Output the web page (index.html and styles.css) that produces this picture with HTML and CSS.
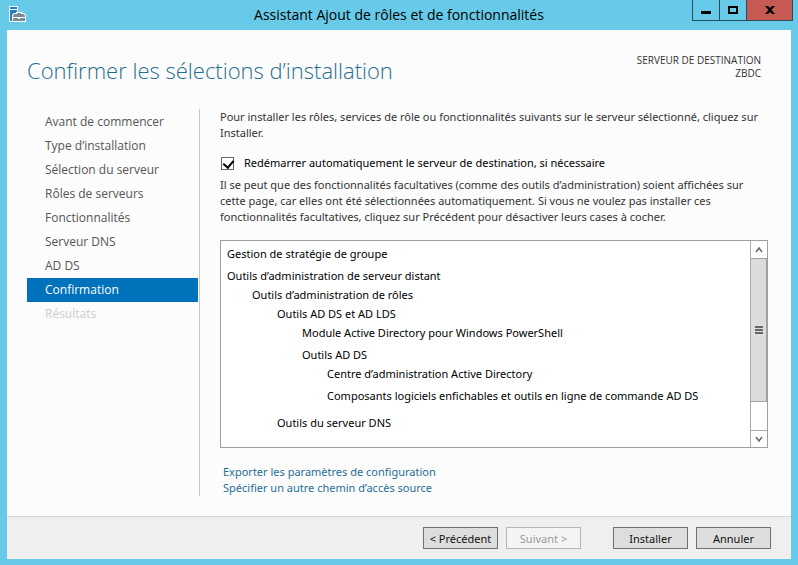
FILE: index.html
```
<!DOCTYPE html>
<html lang="fr">
<head>
  <meta charset="UTF-8" />
  <meta name="viewport" content="width=device-width, initial-scale=1.0"/>
  <title>Assistant Ajout de rôles et de fonctionnalités</title>
  <link rel="stylesheet" href="styles.css">
</head>
<body>
  <div class="window">
    <header class="titlebar">
      <svg class="app-icon" width="17" height="17" viewBox="0 0 17 17">
        <path d="M0 0h9v16H0z" fill="#fff"/>
        <path d="M1 1h7v2H1zM1 4h7v3H5v2H3v6H1z" fill="#2b7cc4"/>
        <path d="M3 16V9l2-2h2V6h6v1h2l2 2v7z" fill="#fff"/>
        <path d="M4 12h5v1h2v-1h5v3H4zM4 9.500L5.500 8h9L16 9.500V11H4zM8 7h4v1H8z" fill="#7b8a94"/>
      </svg>
      <span class="window-title">Assistant Ajout de rôles et de fonctionnalités</span>
      <div class="controls">
        <button type="button" aria-label="Réduire"><svg width="10" height="8" viewBox="0 0 10 8"><path d="M0 5h10v3H0z"/></svg></button>
        <button type="button" aria-label="Agrandir"><svg width="10" height="8" viewBox="0 0 10 8"><path d="M0 0h10v8H0zM2 2v4h6V2z" fill-rule="evenodd"/></svg></button>
        <button type="button" class="close" aria-label="Fermer"><svg width="10" height="8" viewBox="0 0 10 8"><path d="M0 0h3l2 2 2-2h3L6.500 4 10 8H7L5 6 3 8H0l3.500-4z"/></svg></button>
      </div>
    </header>

    <div class="panel">
      <div class="heading">
        <h1>Confirmer les sélections d’installation</h1>
        <p class="server">SERVEUR DE DESTINATION<br>ZBDC</p>
      </div>

      <div class="body">
        <nav class="steps">
          <a href="#">Avant de commencer</a>
          <a href="#">Type d’installation</a>
          <a href="#">Sélection du serveur</a>
          <a href="#">Rôles de serveurs</a>
          <a href="#">Fonctionnalités</a>
          <a href="#">Serveur DNS</a>
          <a href="#">AD DS</a>
          <a href="#" class="active" aria-current="step">Confirmation</a>
          <a class="disabled">Résultats</a>
        </nav>

        <main class="content">
          <p>Pour installer les rôles, services de rôle ou fonctionnalités suivants sur le serveur sélectionné, cliquez sur Installer.</p>
          <div class="restart">
            <input type="checkbox" id="restart" checked>
            <label for="restart">Redémarrer automatiquement le serveur de destination, si nécessaire</label>
          </div>
          <p>Il se peut que des fonctionnalités facultatives (comme des outils d’administration) soient affichées sur cette page, car elles ont été sélectionnées automatiquement. Si vous ne voulez pas installer ces fonctionnalités facultatives, cliquez sur Précédent pour désactiver leurs cases à cocher.</p>

          <div class="selection">
            <ul class="tree">
              <li>Gestion de stratégie de groupe</li>
              <li class="group">Outils d’administration de serveur distant
                <ul>
                  <li>Outils d’administration de rôles
                    <ul>
                      <li>Outils AD DS et AD LDS
                        <ul>
                          <li>Module Active Directory pour Windows PowerShell</li>
                          <li class="group">Outils AD DS
                            <ul>
                              <li>Centre d’administration Active Directory</li>
                              <li class="group">Composants logiciels enfichables et outils en ligne de commande AD DS</li>
                            </ul>
                          </li>
                        </ul>
                      </li>
                      <li class="section">Outils du serveur DNS</li>
                    </ul>
                  </li>
                </ul>
              </li>
              <li class="section">Serveur DNS</li>
            </ul>
            <div class="scrollbar">
              <button type="button" aria-label="Défiler vers le haut"><svg width="8" height="6" viewBox="0 0 8 6"><path d="M1 5l3-4 3 4"/></svg></button>
              <div class="track"><div class="thumb"><svg width="8" height="8" viewBox="0 0 8 8"><path d="M0 1h8M0 4h8M0 7h8"/></svg></div></div>
              <button type="button" aria-label="Défiler vers le bas"><svg width="8" height="6" viewBox="0 0 8 6"><path d="M1 1l3 4 3-4"/></svg></button>
            </div>
          </div>

          <div class="links">
            <a href="#">Exporter les paramètres de configuration</a>
            <a href="#">Spécifier un autre chemin d’accès source</a>
          </div>
        </main>
      </div>

      <footer class="actions">
        <button type="button">&lt; Précédent</button>
        <button type="button" disabled>Suivant &gt;</button>
        <button type="button" class="install">Installer</button>
        <button type="button">Annuler</button>
      </footer>
    </div>
  </div>
</body>
</html>
```
FILE: styles.css
```
* {
  box-sizing: border-box;
}
body {
  margin: 0;
  font-family: "Noto Sans", "Open Sans", sans-serif;
  font-size: 11px;
  line-height: 16px;
  color: #000;
}
p, h1, ul {
  margin: 0;
  padding: 0;
}
a {
  text-decoration: none;
}
button {
  font-family: inherit;
  font-size: inherit;
  padding: 0;
}
.window {
  display: flex;
  flex-direction: column;
  min-height: 100vh;
  padding: 0 7px 7px;
  background: #66cae8;
}

/* title bar */
.titlebar {
  display: grid;
  grid-template-columns: 1fr auto 1fr;
  height: 30px;
}
.app-icon {
  margin: 6px 0 0 2px;
}
.window-title {
  font-family: "Open Sans", sans-serif;
  font-size: 14px;
  line-height: 30px;
}
.controls {
  display: flex;
  justify-self: end;
  height: 21px;
  margin-right: -2px;
  border: 1px solid #24505e;
  border-top: none;
}
.controls button {
  display: flex;
  align-items: center;
  justify-content: center;
  width: 27px;
  background: none;
  border: none;
  border-right: 1px solid #24505e;
}
.controls .close {
  width: 45px;
  background: #c75b53;
  border-right: none;
}

/* page */
.panel {
  flex: 1;
  display: flex;
  flex-direction: column;
  background: #fcfcfc;
}
.heading {
  display: flex;
  justify-content: space-between;
  padding: 24px 30px 0 20px;
  height: 79px;
  font-family: "Open Sans", sans-serif;
}
h1 {
  font-size: 22px;
  line-height: 32px;
  font-weight: 300;
  color: #1f6e8f;
}
.server {
  font-size: 10px;
  line-height: 13px;
  text-align: right;
  color: #333;
}
.body {
  flex: 1;
  display: flex;
  padding: 0 23px 20px 20px;
}
.steps {
  width: 173px;
  flex-shrink: 0;
  padding: 1px 1px 0 0;
  border-right: 1px solid #c8c8c8;
}
.steps a {
  display: block;
  padding-left: 18px;
  font-family: "Open Sans", sans-serif;
  font-size: 12px;
  line-height: 24px;
  color: #555;
}
.steps .active {
  background: #0072bc;
  color: #fff;
}
.steps .disabled {
  color: #ccc;
}
.content {
  flex: 1;
  min-width: 0;
  padding-left: 20px;
}
.content p {
  color: #333;
}
.restart {
  display: flex;
  align-items: center;
  gap: 10px;
  margin: 14px 0 6px;
}
.restart input {
  appearance: none;
  width: 13px;
  height: 13px;
  margin: 0 0 0 1px;
  border: 1px solid #666;
  background: #fff;
  position: relative;
}
.restart input:checked::after {
  content: "";
  position: absolute;
  left: 3px;
  top: 0;
  width: 5px;
  height: 8px;
  border: solid #000;
  border-width: 0 2px 2px 0;
  transform: rotate(40deg);
}

/* selected features */
.selection {
  display: flex;
  height: 208px;
  margin-top: 15px;
  border: 1px solid #a0a0a0;
  background: #fff;
}
.tree {
  flex: 1;
  padding: 3px 0 0 6px;
  overflow: hidden;
  line-height: 19px;
  white-space: nowrap;
}
.tree ul {
  padding-left: 25px;
}
.tree li {
  list-style: none;
}
.tree .group {
  margin-top: 3px;
}
.tree .section {
  margin-top: 8px;
}
.tree > .section {
  margin-top: 10px;
}
.scrollbar {
  display: flex;
  flex-direction: column;
  width: 17px;
  border-left: 1px solid #aaa;
}
.scrollbar button {
  height: 17px;
  background: #fff;
  border: none;
  line-height: 0;
}
.scrollbar button:last-child {
  border-top: 1px solid #aaa;
}
.scrollbar path {
  fill: none;
  stroke: #666;
  stroke-width: 2;
}
.scrollbar button path {
  stroke-width: 1.5;
}
.track {
  flex: 1;
}
.thumb {
  display: flex;
  align-items: center;
  justify-content: center;
  height: 84%;
  background: #dcdcdc;
  border: 1px solid #a0a0a0;
  border-left: none;
}
.links {
  display: flex;
  flex-direction: column;
  align-items: flex-start;
  margin: 16px 0 0 3px;
}
.links a {
  color: #1f6e94;
}

/* buttons */
.actions {
  display: flex;
  justify-content: flex-end;
  gap: 8px;
  padding: 10px 20px;
  border-top: 1px solid #d8d8d8;
  background: #efefef;
}
.actions button {
  width: 75px;
  height: 22px;
  background: #ddd;
  border: 1px solid #707070;
  color: #111;
}
.actions button:disabled {
  background: #f4f4f4;
  border-color: #b5b5b5;
  color: #999;
}
.actions .install {
  margin-left: 24px;
}
```
